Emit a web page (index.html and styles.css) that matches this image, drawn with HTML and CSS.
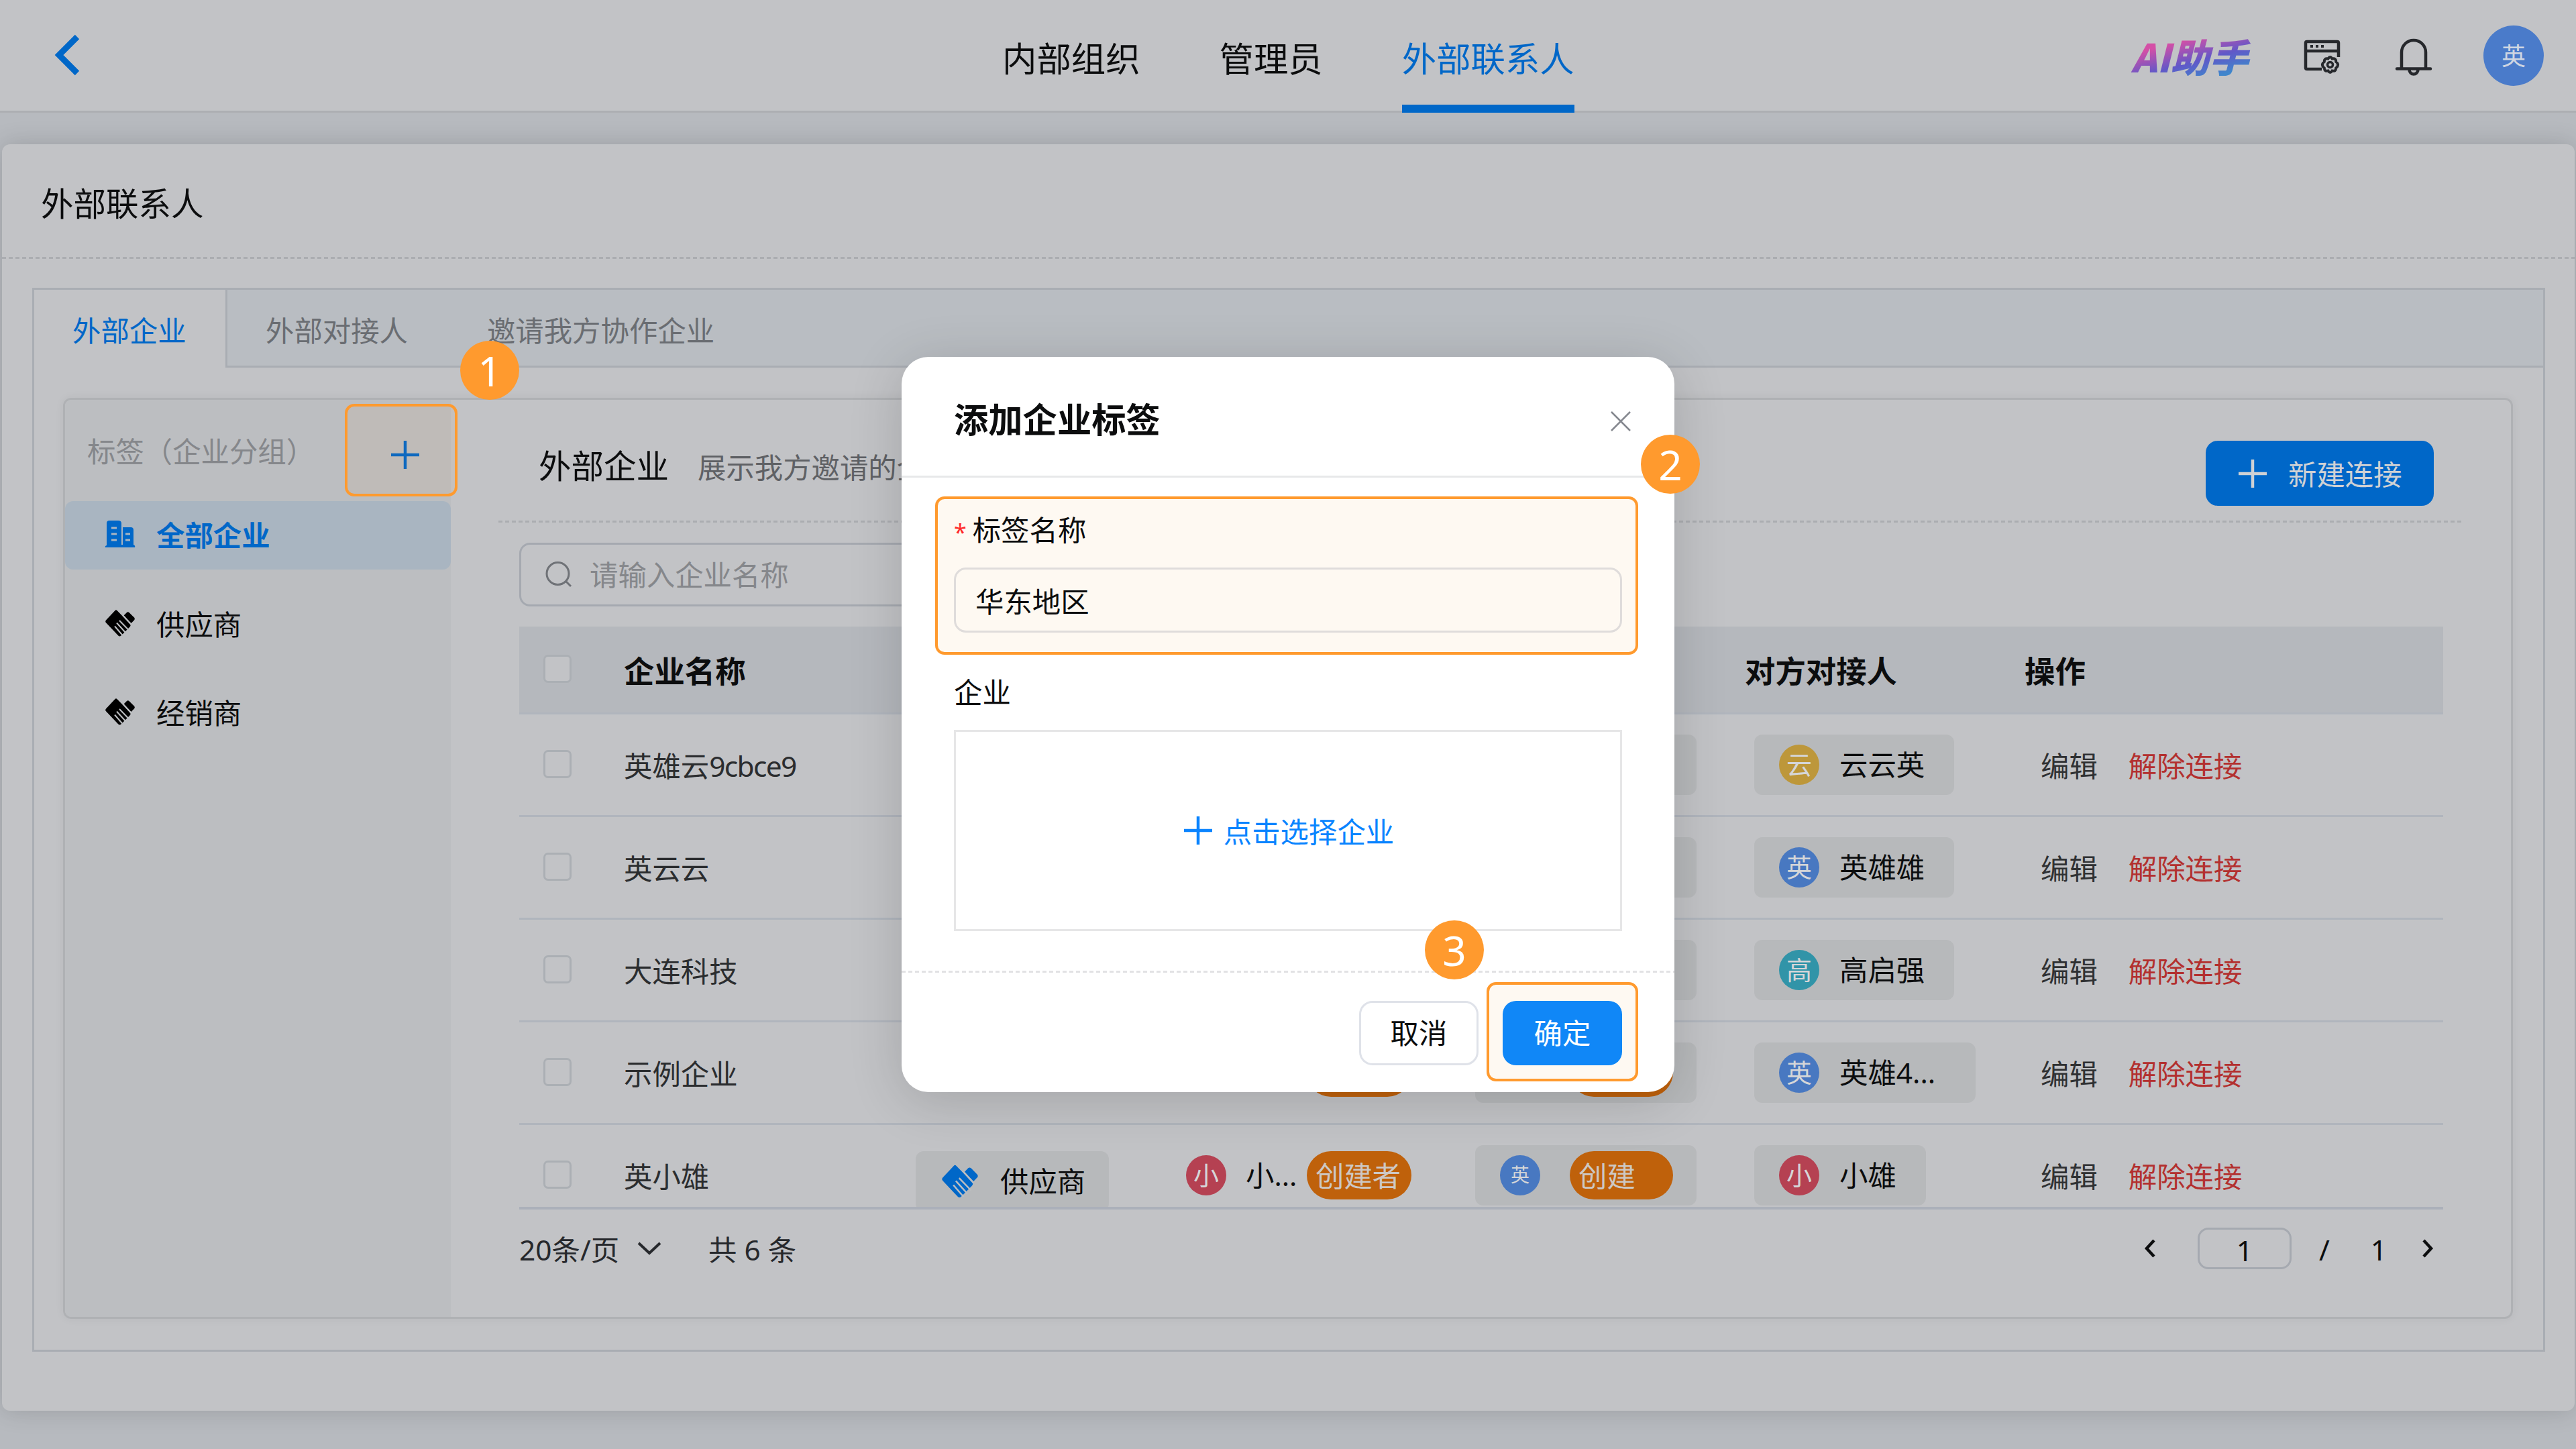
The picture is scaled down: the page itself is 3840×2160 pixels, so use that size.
FILE: index.html
```html
<!DOCTYPE html>
<html lang="zh-CN">
<head>
    <meta charset="UTF-8">
    <title>外部联系人</title>
    <link rel="stylesheet" href="styles.css">
</head>
<body>
    <svg class="sprite" width="0" height="0">
        <symbol id="hands" viewBox="0 0 44 40">
            <path d="M14.6 1Q16 -.4 17.4 1L37 21Q38.500 23.500 36.500 25.500L23.500 38.600Q21.300 40.500 19.300 38.600L1 19.200Q-.6 17.500 1 15.600Z"/>
            <path d="M27.500 8.500L32 4Q33.700 2.700 35.400 4L43 11.600Q44.500 13.500 43 15.400L38.500 20Z"/>
            <path class="slit" d="M25.500 7.500L38.500 22M21 16L35.500 31M17 19.500L31 35M14 24.500L26.500 39"/>
        </symbol>
        <symbol id="plus" viewBox="0 0 42 42">
            <path d="M21 0V42M0 21H42" fill="none" stroke="currentColor" stroke-width="4.500"/>
        </symbol>
    </svg>

    <header class="header">
        <div class="header-back">
            <svg width="36" height="60" viewBox="0 0 36 60"><path d="M32 3L5 30L32 57" fill="none" stroke="#0067c8" stroke-width="9"/></svg>
        </div>
        <nav class="nav">
            <a>内部组织</a>
            <a>管理员</a>
            <a class="active">外部联系人</a>
        </nav>
        <div class="header-tools">
            <span class="ai">AI助手</span>
            <svg class="tool-window" width="54" height="52" viewBox="0 0 54 52" fill="none" stroke="#26282c" stroke-width="4">
                <path d="M26 44H4Q2 44 2 42V5Q2 3 4 3H49Q51 3 51 5V26M2 17H51" stroke-width="4.500"/>
                <path d="M9 10h4M17 10h4M25 10h4"/>
                <path d="M35.500 28.500Q38.500 23.500 41.500 28.500Q47.500 27.500 47.200 33Q53 37.500 47.200 42.500Q47 48 41.500 46.500Q38.500 51.500 35.500 46.500Q30 48 29.800 42.500Q24 37.500 29.800 33Q29.500 27.500 35.500 28.500Z" stroke-width="4"/>
                <circle cx="38.500" cy="37.500" r="4" stroke-width="3.500"/>
            </svg>
            <svg class="tool-bell" width="54" height="56" viewBox="0 0 54 56" fill="none" stroke="#26282c" stroke-width="4.500" stroke-linecap="round">
                <path d="M2 45.500H52M9 45V21A18 18 0 0 1 45 21V45M20.500 47A6.500 6.500 0 0 0 33.500 47"/>
            </svg>
            <span class="me">英</span>
        </div>
    </header>

    <main class="page">
        <h1 class="page-title">外部联系人</h1>
        <div class="dashed"></div>
        <section class="tabs-box">
            <div class="tabs">
                <div class="tab active">外部企业</div>
                <div class="tab">外部对接人</div>
                <div class="tab">邀请我方协作企业</div>
            </div>
            <div class="panel">
                <aside class="side">
                    <div class="side-head">
                        <span>标签（企业分组）</span>
                        <svg class="side-plus" width="42" height="42"><use href="#plus"/></svg>
                    </div>
                    <div class="side-item active">
                        <svg width="44" height="40" viewBox="0 0 44 40">
                            <path d="M2 37V4Q2 0 6 0H19Q24 0 24 4V36H26V10H38Q42 10 42 14V36Q45 37 44 40H0Q-1 38 2 37Z" fill="#0067c8"/>
                            <path d="M9 11H17M9 20H17M9 29H17M30 20H37M30 29H37" stroke="#a9b5c1" stroke-width="3"/>
                        </svg>
                        <span>全部企业</span>
                    </div>
                    <div class="side-item">
                        <svg width="44" height="40"><use href="#hands"/></svg>
                        <span>供应商</span>
                    </div>
                    <div class="side-item">
                        <svg width="44" height="40"><use href="#hands"/></svg>
                        <span>经销商</span>
                    </div>
                </aside>

                <div class="content">
                    <div class="content-head">
                        <h2>外部企业</h2>
                        <p>展示我方邀请的企业</p>
                        <button class="btn-new"><svg width="42" height="42"><use href="#plus"/></svg><span>新建连接</span></button>
                    </div>
                    <div class="dashed"></div>
                    <div class="content-body">
                        <div class="search">
                            <svg width="40" height="42" viewBox="0 0 40 42" fill="none" stroke="#6f7277" stroke-width="3"><circle cx="18.500" cy="19" r="16.500"/><path d="M31 31L38 38"/></svg>
                            请输入企业名称
                        </div>
                        <div class="table">
                            <div class="row head">
                                <i class="check"></i><b class="c-name">企业名称</b><b class="c-contact">对方对接人</b><b class="c-act">操作</b>
                            </div>
                            <div class="row">
                                <i class="check"></i><span class="c-name">英雄云<span class="latin">9cbce9</span></span>
                                <div class="c-join"><span class="chip join"></span></div>
                                <div class="c-contact"><span class="chip"><i class="avatar yellow">云</i>云云英</span></div>
                                <div class="c-act"><a>编辑</a><a class="del">解除连接</a></div>
                            </div>
                            <div class="row">
                                <i class="check"></i><span class="c-name">英云云</span>
                                <div class="c-join"><span class="chip join"></span></div>
                                <div class="c-contact"><span class="chip"><i class="avatar blue">英</i>英雄雄</span></div>
                                <div class="c-act"><a>编辑</a><a class="del">解除连接</a></div>
                            </div>
                            <div class="row">
                                <i class="check"></i><span class="c-name">大连科技</span>
                                <div class="c-join"><span class="chip join"></span></div>
                                <div class="c-contact"><span class="chip"><i class="avatar cyan">高</i>高启强</span></div>
                                <div class="c-act"><a>编辑</a><a class="del">解除连接</a></div>
                            </div>
                            <div class="row">
                                <i class="check"></i><span class="c-name">示例企业</span>
                                <div class="c-owner"><span class="pill owner-pill">创建者</span></div>
                                <div class="c-join"><span class="chip join"><span class="pill join-pill">创建</span></span></div>
                                <div class="c-contact"><span class="chip wide"><i class="avatar blue">英</i>英雄4...</span></div>
                                <div class="c-act"><a>编辑</a><a class="del">解除连接</a></div>
                            </div>
                            <div class="row">
                                <i class="check"></i><span class="c-name">英小雄</span>
                                <div class="c-tag"><span class="chip tag"><svg width="54" height="50"><use href="#hands"/></svg>供应商</span></div>
                                <div class="c-owner"><i class="avatar red">小</i><span class="owner-name">小...</span><span class="pill owner-pill">创建者</span></div>
                                <div class="c-join"><span class="chip join"><i class="avatar blue small">英</i><span class="pill join-pill">创建</span></span></div>
                                <div class="c-contact"><span class="chip"><i class="avatar red">小</i>小雄</span></div>
                                <div class="c-act"><a>编辑</a><a class="del">解除连接</a></div>
                            </div>
                        </div>
                        <div class="pager">
                            <span>20条/页</span>
                            <svg class="pager-down" width="36" height="20" viewBox="0 0 36 20"><path d="M2 2L18 17L34 2" fill="none" stroke="#26282c" stroke-width="4"/></svg>
                            <span>共 6 条</span>
                            <div class="pager-nav">
                                <svg width="18" height="28" viewBox="0 0 18 28"><path d="M15 2L4 14L15 26" fill="none" stroke="#0c0d0e" stroke-width="4.500"/></svg>
                                <span class="pager-input">1</span>
                                <span class="pager-slash">/</span>
                                <span class="pager-total">1</span>
                                <svg width="18" height="28" viewBox="0 0 18 28"><path d="M3 2L14 14L3 26" fill="none" stroke="#0c0d0e" stroke-width="4.500"/></svg>
                            </div>
                        </div>
                    </div>
                </div>
            </div>
        </section>
    </main>

    <!-- 添加企业标签 -->
    <div class="modal">
        <div class="modal-head">
            <h3>添加企业标签</h3>
            <svg width="30" height="30" viewBox="0 0 30 30"><path d="M1 1L29 29M29 1L1 29" stroke="#85888f" stroke-width="2.500"/></svg>
        </div>
        <div class="modal-body">
            <div class="field">
                <label><em>*</em>标签名称</label>
                <div class="input">华东地区</div>
            </div>
            <label class="label-company">企业</label>
            <div class="picker"><svg width="42" height="42"><use href="#plus"/></svg><span>点击选择企业</span></div>
        </div>
        <div class="dashed light"></div>
        <div class="modal-foot">
            <button class="btn">取消</button>
            <div class="confirm"><button class="btn primary">确定</button></div>
        </div>
    </div>

    <div class="mark"></div>
    <span class="step step1">1</span>
    <span class="step step2">2</span>
    <span class="step step3">3</span>
</body>
</html>
```
FILE: styles.css
```css
* {
  box-sizing: border-box;
}

body {
  position: relative;
  width: 3840px;
  height: 2160px;
  margin: 0;
  overflow: hidden;
  background-color: #b7babf;
  color: #0c0d0e;
  font-family: "Noto Sans", "Noto Sans CJK SC", sans-serif;
  font-size: 42.4px;
  line-height: 60px;
}

h1, h2, h3, p {
  margin: 0;
  font-weight: normal;
}

i, em {
  font-style: normal;
}

svg {
  display: block;
  flex: none;
  overflow: visible;
}

button {
  border: none;
  font: inherit;
}

.sprite {
  position: absolute;
}

.dashed {
  height: 3px;
  background: repeating-linear-gradient(90deg, #abadb1 0 6px, transparent 6px 10px);
}

.dashed.light {
  background: repeating-linear-gradient(90deg, #e2e2e4 0 6px, transparent 6px 10px);
}

/* header */
.header {
  display: flex;
  height: 168px;
  background-color: #c2c3c6;
  border-bottom: 3px solid #adafb3;
}

.header-back {
  width: 1494px;
  padding: 52px 0 0 83px;
}

.nav {
  display: flex;
  gap: 118px;
  height: 168px;
  font-size: 51.4px;
}

.nav a {
  height: 168px;
  padding-top: 57px;
}

.nav .active {
  color: #0067c8;
  border-bottom: 12px solid #0067c8;
}

.header-tools {
  display: flex;
  align-items: center;
  margin-left: auto;
  padding-right: 48px;
}

.ai {
  width: 190px;
  margin-right: 68px;
  font-family: "Noto Sans CJK SC", sans-serif;
  font-size: 58px;
  font-weight: 900;
  font-style: italic;
  white-space: nowrap;
  background: linear-gradient(165deg, #d44fa6 25%, #6158c8 58%, #3f86cc 85%);
  -webkit-background-clip: text;
  background-clip: text;
  color: transparent;
}

.tool-window {
  margin-top: 5px;
}

.tool-bell {
  margin: 4px 77px 0 82px;
}

.me {
  width: 90px;
  height: 90px;
  border-radius: 50%;
  background-color: #4a7bca;
  color: #cfd6e2;
  font-size: 36px;
  line-height: 91px;
  text-align: center;
}

/* page card */
.page {
  height: 1888px;
  margin: 47px 2px 0 3px;
  background-color: #c2c3c6;
  border-radius: 12px;
  box-shadow: 0 0 36px rgba(0, 0, 0, 0.16);
}

.page-title {
  height: 168px;
  padding: 58px 0 0 58px;
  font-size: 48.5px;
}

.tabs-box {
  height: 1586px;
  margin: 43px 44px 0 45px;
  border: 3px solid #a9adb3;
}

.tabs {
  display: flex;
  height: 116px;
  background-color: #b9bdc2;
  border-bottom: 3px solid #a9adb3;
}

.tab {
  flex: none;
  padding: 31px 61px 0 57px;
  color: #6a6d72;
}

.tab.active {
  width: 288px;
  height: 116px;
  padding: 31px 0 0 57px;
  background-color: #c2c3c6;
  border-right: 3px solid #a9adb3;
  color: #0067c8;
  white-space: nowrap;
}

.panel {
  display: flex;
  height: 1373px;
  margin: 45px 45px 0 43px;
  border: 3px solid #afb1b4;
  border-radius: 12px;
  box-shadow: 0 0 14px rgba(0, 0, 0, 0.05);
  overflow: hidden;
}

/* sidebar */
.side {
  width: 575px;
  background-color: #bcbec1;
}

.side-head {
  display: flex;
  justify-content: space-between;
  height: 151px;
  padding: 47px 47px 0 33px;
  color: #85878b;
}

.side-plus {
  margin-top: 14px;
  color: #0067c8;
}

.side-item {
  display: flex;
  align-items: center;
  gap: 32px;
  height: 102px;
  margin-bottom: 30px;
  padding-left: 60px;
}

.side-item svg {
  margin-top: -5px;
}

.side-item.active {
  margin-bottom: 31px;
  background-color: #a9b5c1;
  border-radius: 12px;
  color: #0067c8;
  font-weight: bold;
}

.slit {
  fill: none;
  stroke: #bcbec1;
  stroke-width: 2;
}

/* content */
.content {
  flex: 1;
  padding: 0 70px 0 71px;
}

.content-head {
  display: flex;
  height: 180px;
  padding: 0 45px 0 60px;
}

.content-head h2 {
  padding-top: 68px;
  font-size: 48.5px;
}

.content-head p {
  padding: 71px 0 0 43px;
  color: #5f6165;
}

.btn-new {
  display: flex;
  align-items: center;
  gap: 32px;
  width: 340px;
  height: 97px;
  margin: 61px 0 0 auto;
  padding: 0 0 0 49px;
  border-radius: 18px;
  background-color: #0067c8;
  color: #cfd1d4;
}

.btn-new span {
  padding-top: 3px;
}

.content-body {
  padding: 30px 31px 0 31px;
}

.search {
  display: flex;
  align-items: center;
  gap: 26px;
  width: 900px;
  height: 95px;
  padding-left: 36px;
  border: 3px solid #a5a9b0;
  border-radius: 16px;
  color: #85878b;
}

.table {
  height: 869px;
  margin-top: 30px;
  border-bottom: 4px solid #abb0ba;
  overflow: hidden;
}

.row {
  display: grid;
  grid-template-columns: 156px 435px 403px 431px 402px 417px 1fr;
  grid-template-rows: 100%;
  align-items: center;
  height: 153px;
  border-bottom: 3px solid #b0b5bd;
}

.row.head {
  height: 131px;
  background-color: #b5b8bd;
  font-size: 45.4px;
}

.check {
  width: 42px;
  height: 42px;
  margin: -2px 0 0 36px;
  border: 3px solid #abafb4;
  border-radius: 7px;
}

.head .check {
  background-color: #c2c3c6;
}

.c-name { grid-column: 2; }
.c-tag { grid-column: 3; }
.c-owner { grid-column: 4; }
.c-join { grid-column: 5; }
.c-contact { grid-column: 6; }
.c-act { grid-column: 7; }

.row > * {
  grid-row: 1;
}

.row > b {
  padding-top: 3px;
}

.row:not(.head) .c-name {
  padding-top: 4px;
  color: #2b2d2f;
}

.latin {
  letter-spacing: -1.6px;
}

.c-owner,
.c-act {
  display: flex;
  align-items: center;
}

.c-act a {
  margin-left: 24px;
  padding-top: 3px;
  color: #2f3133;
}

.c-act .del {
  margin-left: 46px;
  color: #b3302f;
}

.c-contact .chip {
  margin-left: 14px;
}

.chip {
  display: inline-flex;
  align-items: center;
  height: 90px;
  padding: 0 44px 0 37px;
  border-radius: 12px;
  background-color: #b7b9bb;
  vertical-align: top;
}

.row div {
  line-height: 60px;
}

.chip .avatar {
  margin-right: 30px;
}

.chip.wide {
  width: 330px;
}

.chip.join {
  position: relative;
  width: 330px;
  padding-right: 0;
}

.c-tag {
  padding-top: 17px;
}

.chip.tag {
  gap: 33px;
  padding-left: 39px;
  padding-right: 35px;
}

.chip.tag svg {
  fill: #0067c8;
}

.avatar {
  width: 60px;
  height: 60px;
  border-radius: 50%;
  color: #d5d6d8;
  font-size: 38px;
  line-height: 59px;
  text-align: center;
}

.avatar.small { font-size: 28px; }
.avatar.yellow { background-color: #bd973a; }
.avatar.blue { background-color: #4878c1; }
.avatar.cyan { background-color: #3194a8; }
.avatar.red { background-color: #b54152; }

.owner-name {
  width: 90px;
  margin-left: 29px;
}

.pill {
  height: 72px;
  padding-left: 13px;
  border-radius: 36px;
  background-color: #bf610b;
  color: #cdc8c4;
  line-height: 73px;
}

.owner-pill {
  width: 156px;
  margin-left: auto;
  margin-right: 95px;
}

.join-pill {
  width: 154px;
  margin-left: auto;
  margin-right: 35px;
}

/* pagination */
.pager {
  display: flex;
  align-items: center;
  height: 116px;
  color: #26282c;
}

.pager > span,
.pager-slash,
.pager-total {
  padding-top: 4px;
}

.pager-down {
  margin: 0 70px 0 27px;
}

.pager-nav {
  display: flex;
  align-items: center;
  margin: 0 14px 0 auto;
  color: #0c0d0e;
}

.pager-input {
  width: 140px;
  height: 62px;
  margin: 0 41px 0 62px;
  border: 3px solid #a5a9b0;
  border-radius: 16px;
  line-height: 61px;
  text-align: center;
}

.pager-total {
  margin: 0 52px 0 61px;
}

/* modal */
.modal {
  position: absolute;
  left: 1344px;
  top: 532px;
  display: flex;
  flex-direction: column;
  width: 1152px;
  height: 1096px;
  border-radius: 40px;
  background-color: #fff;
  box-shadow: 0 12px 80px rgba(0, 0, 0, 0.16);
}

.modal-head {
  display: flex;
  justify-content: space-between;
  height: 180px;
  padding: 63px 65px 0 78px;
  border-bottom: 3px solid #e7e8e9;
}

.modal-head h3 {
  font-size: 51.3px;
  font-weight: bold;
}

.modal-head svg {
  margin-top: 18px;
}

.modal-body {
  height: 735px;
  padding: 28px 54px 0 50px;
}

.field,
.confirm,
.mark {
  border: 4px solid #ff9a2e;
  border-radius: 14px;
  background-color: #fef9f2;
}

.field {
  height: 236px;
  padding: 16px 20px 0 24px;
}

.field label {
  display: block;
}

.field em {
  margin-right: 9px;
  color: #ff2a2a;
  font-size: 34px;
}

.input {
  height: 97px;
  margin-top: 23px;
  padding-left: 29px;
  border: 3px solid #dfdcdb;
  border-radius: 18px;
  line-height: 95px;
}

.label-company {
  display: block;
  margin: 26px 0 0 28px;
}

.picker {
  display: flex;
  justify-content: center;
  align-items: center;
  gap: 17px;
  width: 996px;
  height: 300px;
  margin: 26px 0 0 28px;
  padding-left: 3px;
  border: 3px solid #e6e6e7;
  color: #0a84ff;
}

.picker span {
  padding-top: 4px;
}

.modal-foot {
  display: flex;
  justify-content: flex-end;
  gap: 12px;
  padding: 14px 54px 0 0;
}

.btn {
  width: 178px;
  height: 96px;
  border: 3px solid #dfe2e9;
  border-radius: 20px;
  background-color: #fff;
  color: #0c0d0e;
}

.modal-foot > .btn {
  margin-top: 28px;
}

.btn.primary {
  border: none;
  background-color: #1087f7;
  color: #fff;
}

.confirm {
  height: 148px;
  padding: 24px 20px 0;
}

/* step marks */
.mark {
  position: absolute;
  left: 514px;
  top: 602px;
  width: 168px;
  height: 138px;
  background-color: rgba(255, 154, 46, 0.06);
}

.step {
  position: absolute;
  width: 88px;
  height: 88px;
  border-radius: 50%;
  background-color: #ff9a2e;
  color: #fff;
  font-size: 62px;
  line-height: 88px;
  text-align: center;
}

.step1 {
  left: 686px;
  top: 508px;
}

.step2 {
  left: 2446px;
  top: 648px;
}

.step3 {
  left: 2124px;
  top: 1372px;
}
```
